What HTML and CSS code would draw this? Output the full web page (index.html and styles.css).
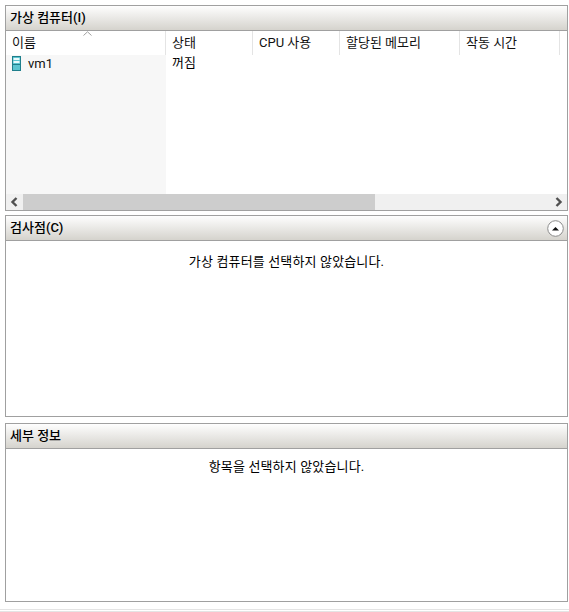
FILE: index.html
```html
<!DOCTYPE html>
<html lang="ko">
<head>
<meta charset="utf-8">
<title>가상 컴퓨터</title>
<link rel="stylesheet" href="styles.css">
</head>
<body>
<main class="window">
  <section class="panel panel-vms">
    <header class="panel-head"><h2>가상 컴퓨터(I)</h2></header>
    <div class="list">
      <div class="list-head">
        <div class="col col-name">이름<svg class="sort" width="9" height="5" viewBox="0 0 9 5"><path d="M0.5 4.5 L4.5 0.8 L8.5 4.5" fill="none" stroke="#a0a0a0"/></svg></div>
        <div class="col col-state">상태</div>
        <div class="col col-cpu">CPU 사용</div>
        <div class="col col-mem">할당된 메모리</div>
        <div class="col col-up">작동 시간</div>
        <div class="col col-more"></div>
      </div>
      <div class="list-body">
        <div class="cell-name">
          <svg class="vm-icon" width="9" height="15" viewBox="0 0 9 15">
            <rect x="0.5" y="0.5" width="8" height="14" fill="#5cc4d0" stroke="#1f7f8c"/>
            <rect x="1.5" y="2" width="6" height="2" fill="#e8fafc"/>
            <rect x="1.5" y="5" width="6" height="2" fill="#e8fafc"/>
            <rect x="1" y="8" width="7" height="1" fill="#1f7f8c"/>
          </svg>
          <span>vm1</span>
        </div>
        <div class="cell-state">꺼짐</div>
      </div>
    </div>
    <div class="scrollbar">
      <svg class="arrow" width="17" height="16" viewBox="0 0 17 16"><path d="M10.500 4 L6.500 8 L10.500 12" fill="none" stroke="#505050" stroke-width="2.400"/></svg>
      <div class="track"><div class="thumb"></div></div>
      <svg class="arrow" width="17" height="16" viewBox="0 0 17 16"><path d="M6.500 4 L10.500 8 L6.500 12" fill="none" stroke="#505050" stroke-width="2.400"/></svg>
    </div>
  </section>

  <section class="panel panel-check">
    <header class="panel-head">
      <h2>검사점(C)</h2>
      <button class="collapse" type="button" aria-label="접기"><svg width="17" height="17" viewBox="0 0 17 17"><circle cx="8.500" cy="8.500" r="7.800" fill="#fff" stroke="#8c8c8c"/><path d="M5 10.500 L8.500 7 L12 10.500 Z" fill="#111"/></svg></button>
    </header>
    <p class="empty">가상 컴퓨터를 선택하지 않았습니다.</p>
  </section>

  <section class="panel panel-detail">
    <header class="panel-head"><h2>세부 정보</h2></header>
    <p class="empty empty-detail">항목을 선택하지 않았습니다.</p>
  </section>
</main>
<footer class="foot"></footer>
</body>
</html>
```

FILE: styles.css
```css
* { box-sizing: border-box; }
html, body { margin: 0; padding: 0; height: 612px; overflow: hidden; background: #fff; }
body {
  font-family: Roboto, "Noto Sans CJK KR", "Noto Sans", sans-serif;
  font-size: 13px;
  color: #000;
  position: relative;
}
.window { display: flex; flex-direction: column; padding: 5px 1px 0 5px; }
.panel { border: 1px solid #a0a0a0; display: flex; flex-direction: column; background: #fff; }
.panel-vms { height: 206px; }
.panel-check { height: 202px; margin-top: 4px; }
.panel-detail { height: 179px; margin-top: 6px; }
.panel-head {
  height: 25px;
  flex: none;
  display: flex;
  align-items: center;
  justify-content: space-between;
  padding: 0 3px 0 4px;
  background: linear-gradient(#fefefe, #d5d3cd);
  border-bottom: 1px solid #a0a0a0;
}
.panel-head h2 { margin: 0; font-size: 13px; font-weight: 500; line-height: 24px; color: #000; }
.collapse { border: 0; padding: 0; background: none; display: flex; margin: 0; }
.list { flex: 1; display: flex; flex-direction: column; min-height: 0; }
.list-head { display: flex; height: 24px; flex: none; }
.col { position: relative; padding: 3px 0 0 6px; line-height: 17px; border-right: 1px solid #e4e4e4; color: #111; }
.col-name { width: 160px; }
.col-state { width: 87px; }
.col-cpu { width: 87px; }
.col-mem { width: 120px; }
.col-up { width: 100px; }
.col-more { flex: 1; border-right: 0; }
.sort { position: absolute; left: 77px; top: 0; }
.list-body { flex: 1; display: flex; }
.cell-name { width: 160px; background: #f7f7f7; display: flex; align-items: flex-start; padding: 1px 0 0 6px; gap: 7px; line-height: 15px; }
.vm-icon { flex: none; }
.cell-name span { color: #111; }
.cell-state { padding: 0 0 0 6px; line-height: 16px; }
.scrollbar { display: flex; height: 16px; flex: none; background: #f0f0f0; }
.arrow { flex: none; }
.track { flex: 1; }
.thumb { width: 352px; height: 100%; background: #cdcdcd; }
.empty { margin: 12px 0 0; text-align: center; line-height: 18px; color: #000; letter-spacing: 0.15px; }
.empty-detail { margin-top: 9px; }
.foot { position: absolute; left: 0; right: 0; top: 609px; height: 3px; border-top: 1px solid #e4e4e4; border-bottom: 1px solid #e4e4e4; }
```
